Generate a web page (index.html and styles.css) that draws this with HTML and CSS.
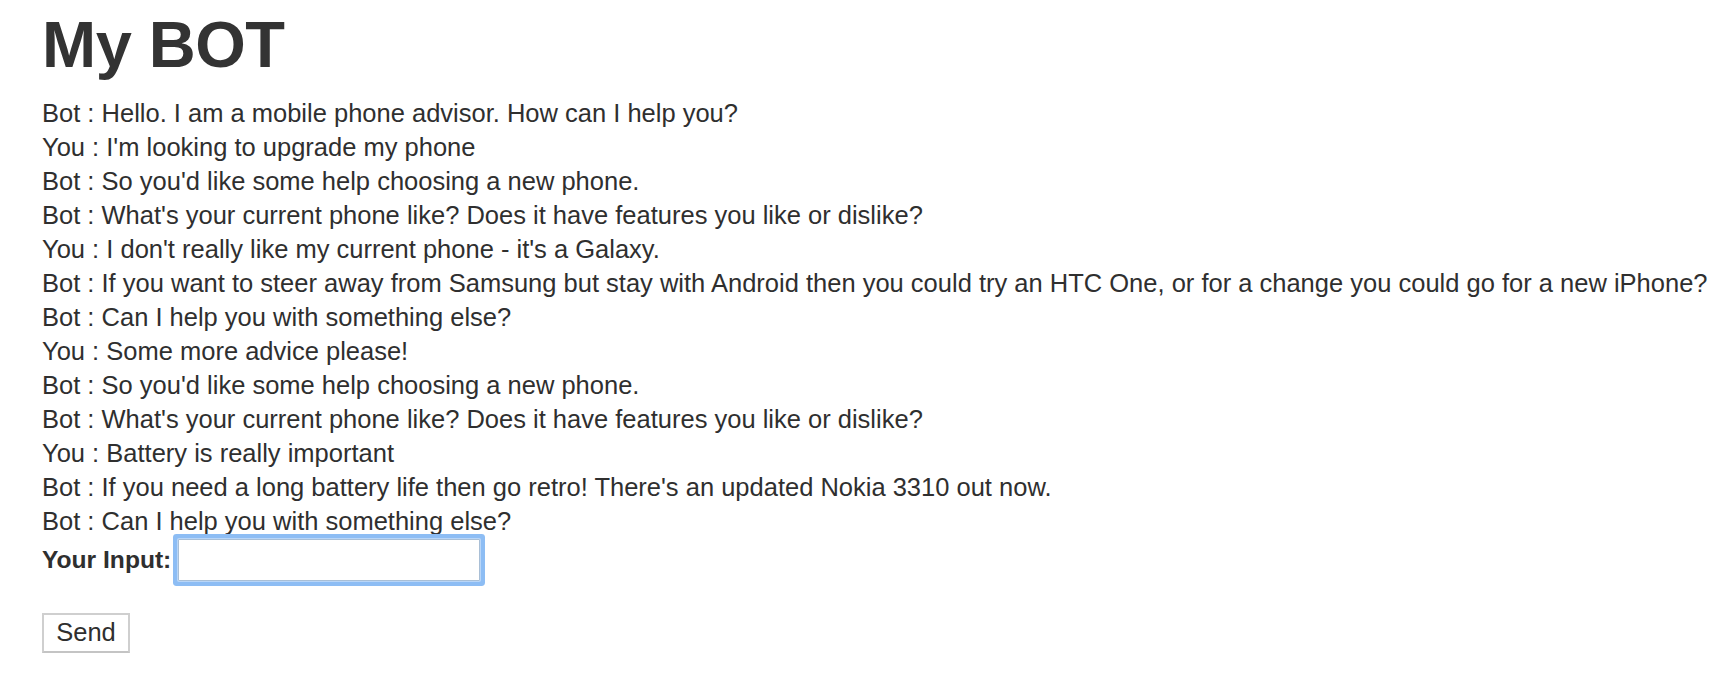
FILE: index.html
```html
<!DOCTYPE html>
<html>
<head>
<meta charset="utf-8">
<title>My BOT</title>
<link rel="stylesheet" href="styles.css">
</head>
<body>
<div class="page">
  <h1 class="title">My BOT</h1>
  <div class="chat">
    <div class="line">Bot : Hello. I am a mobile phone advisor. How can I help you?</div>
    <div class="line">You : I'm looking to upgrade my phone</div>
    <div class="line">Bot : So you'd like some help choosing a new phone.</div>
    <div class="line">Bot : What's your current phone like? Does it have features you like or dislike?</div>
    <div class="line">You : I don't really like my current phone - it's a Galaxy.</div>
    <div class="line">Bot : If you want to steer away from Samsung but stay with Android then you could try an HTC One, or for a change you could go for a new iPhone?</div>
    <div class="line">Bot : Can I help you with something else?</div>
    <div class="line">You : Some more advice please!</div>
    <div class="line">Bot : So you'd like some help choosing a new phone.</div>
    <div class="line">Bot : What's your current phone like? Does it have features you like or dislike?</div>
    <div class="line">You : Battery is really important</div>
    <div class="line">Bot : If you need a long battery life then go retro! There's an updated Nokia 3310 out now.</div>
    <div class="line">Bot : Can I help you with something else?</div>
  </div>
  <form class="input-form">
    <div class="input-row">
      <label class="input-label" for="msg">Your Input:</label>
      <input class="input-box" id="msg" type="text">
    </div>
    <button class="send-btn" type="button">Send</button>
  </form>
</div>
</body>
</html>
```
FILE: styles.css
```css
html, body {
  margin: 0;
  padding: 0;
  background: #ffffff;
}
body {
  font-family: "Liberation Sans", Arial, Helvetica, sans-serif;
  color: #2f2f2f;
  font-size: 25.5px;
  line-height: 34px;
}
.page {
  padding-left: 42px;
}
.title {
  font-size: 65px;
  font-weight: bold;
  line-height: 1.1;
  margin: 9px 0 15px 0;
  letter-spacing: -0.5px;
  color: #333333;
}
.chat {
  display: flex;
  flex-direction: column;
}
.line {
  white-space: nowrap;
}
.input-form {
  display: flex;
  flex-direction: column;
  align-items: flex-start;
}
.input-row {
  display: flex;
  align-items: center;
  margin-top: 1px;
}
.input-label {
  font-weight: bold;
  font-size: 24.6px;
}
.input-box {
  box-sizing: border-box;
  width: 302px;
  height: 42px;
  margin-left: 7px;
  border: 1px solid #a9bfd6;
  border-radius: 1px;
  box-shadow: 0 0 0 1px #b9d6f8, 0 0 0 5px #8dbdf4;
  outline: none;
  font-family: inherit;
  font-size: 24px;
  padding: 0 4px;
  background: #ffffff;
}
.send-btn {
  box-sizing: border-box;
  margin-top: 32px;
  width: 88px;
  height: 40px;
  border: 2px solid #cfcfcf;
  border-bottom-color: #c4c4c4;
  background: #ffffff;
  color: #2f2f2f;
  font-family: inherit;
  font-size: 25.5px;
  padding: 0 0 1px 0;
  border-radius: 0;
}
```
